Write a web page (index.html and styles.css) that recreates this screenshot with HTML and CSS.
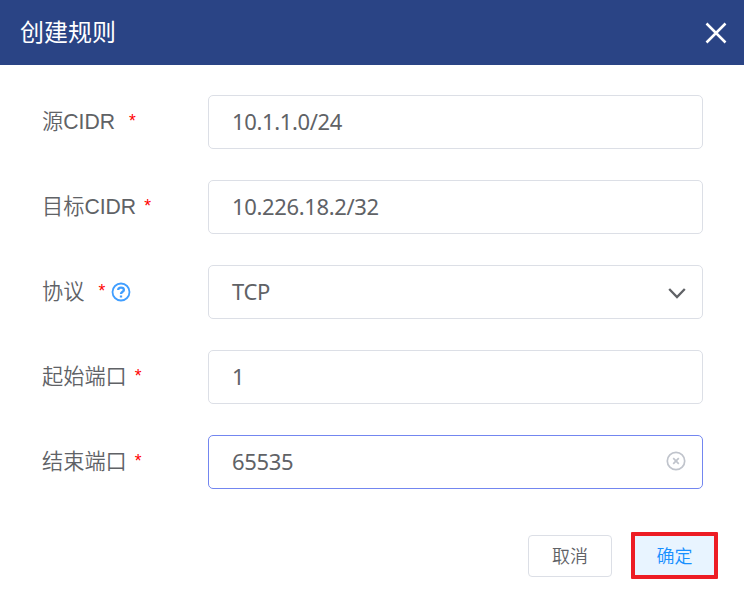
FILE: index.html
```html
<!DOCTYPE html>
<html lang="zh-CN">
<head>
<meta charset="utf-8">
<title>创建规则</title>
<link rel="stylesheet" href="styles.css">
</head>
<body>
<section class="dialog">
  <header class="header">
    <h1 class="title">创建规则</h1>
    <svg class="close" viewBox="0 0 20 20"><path d="M.5 .5 19.5 19.5M19.5 .5 .5 19.5"/></svg>
  </header>
  <form class="form">
    <div class="row"><label class="label"><span class="name">源CIDR</span><span class="star star-far">*</span></label><div class="field">10.1.1.0/24</div></div>
    <div class="row"><label class="label"><span class="name">目标CIDR</span><span class="star">*</span></label><div class="field">10.226.18.2/32</div></div>
    <div class="row"><label class="label"><span class="name">协议</span><span class="star star-far">*</span>
      <svg class="help" viewBox="0 0 20 20"><circle cx="10" cy="10" r="8.5"/><path class="query" d="M7.2 8.1C7.2 6.4 8.3 5.6 10 5.6s2.9.9 2.9 2.3c0 1.8-2.9 1.9-2.9 4M10 13.4v2"/></svg></label>
      <div class="field"><span>TCP</span><svg class="arrow" viewBox="0 0 18 10"><path d="M1.2 1 9 9 16.8 1"/></svg></div></div>
    <div class="row"><label class="label"><span class="name">起始端口</span><span class="star">*</span></label><div class="field">1</div></div>
    <div class="row"><label class="label"><span class="name">结束端口</span><span class="star">*</span></label><div class="field focus"><span>65535</span><svg class="clear" viewBox="0 0 20 20"><circle cx="10" cy="10" r="8.7"/><path d="M7.2 7.2 12.8 12.8M12.8 7.2 7.2 12.8"/></svg></div></div>
  </form>
  <footer class="footer">
    <button class="button">取消</button>
    <div class="mark"><button class="button primary">确定</button></div>
  </footer>
</section>
</body>
</html>
```
FILE: styles.css
```css
* { box-sizing: border-box; }
body { margin: 0; background: #fff; color: #606266; font-family: "Liberation Sans", "Noto Sans CJK SC", sans-serif; }
.dialog { width: 744px; height: 599px; overflow: hidden; }
.header { height: 65px; padding: 0 18px 0 20px; background: #2a4485; display: flex; align-items: center; justify-content: space-between; }
.title { margin: 0; color: #fff; font-size: 24px; font-weight: 400; line-height: 36px; }
.close { width: 20px; height: 20px; fill: none; stroke: #fff; stroke-width: 2.5; overflow: visible; }
.form { padding: 30px 41px 0 42px; display: grid; gap: 31px; }
.row { height: 54px; display: grid; grid-template-columns: 166px 495px; }
.label { display: flex; align-items: center; font-size: 21.2px; font-weight: 350; line-height: 32px; white-space: nowrap; }
.star { color: #f00; margin: -3px 0 0 8px; font-size: 17.5px; }
.star-far { margin-left: 14px; }
.help { width: 20px; height: 20px; margin-left: 6px; fill: none; stroke: #409eff; stroke-width: 1.8; }
.query { stroke-width: 2.3; }
.field { height: 54px; border: 1px solid #dcdfe6; border-radius: 5px; padding: 0 16px 2px 23px; display: flex; align-items: center; justify-content: space-between; font: 22px "Noto Sans", sans-serif; letter-spacing: -.36px; }
.focus { border-color: #7386f0; }
.arrow { width: 18px; height: 10px; margin-top: 3px; fill: none; stroke: #606266; stroke-width: 2.3; overflow: visible; }
.clear { width: 20px; height: 20px; fill: none; stroke: #c0c4cc; stroke-width: 1.7; }
.footer { display: flex; justify-content: flex-end; align-items: center; gap: 19px; padding: 43px 26px 0 0; }
.button { width: 84px; height: 42px; border: 1px solid #dcdfe6; border-radius: 4px; background: #fff; color: #606266; font: 350 18px "Noto Sans CJK SC", sans-serif; padding: 0 0 1px; }
.mark { width: 87px; height: 47px; border: 4px solid #ed1c24; border-radius: 1px; display: flex; }
.primary { width: 100%; height: 100%; border: 0; border-radius: 0; background: #e8f4ff; color: #1890ff; }
```
